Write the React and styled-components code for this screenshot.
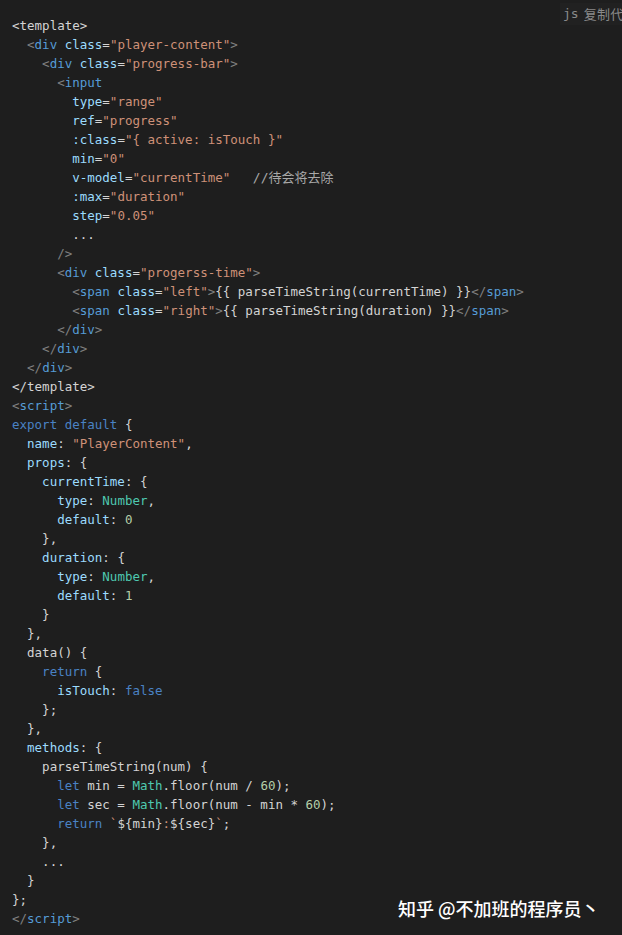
import React from "react";
import styled, { createGlobalStyle } from "styled-components";

const Global = createGlobalStyle`
  html, body { margin: 0; padding: 0; background: #1e1e1e; }
  #root { width: 622px; height: 935px; }
`;

const Page = styled.div`
  position: relative;
  width: 622px;
  height: 935px;
  overflow: hidden;
  background: #1e1e1e;
`;

const Code = styled.pre`
  margin: 0;
  padding: 16px 12px 0 12px;
  font-family: "DejaVu Sans Mono", "Liberation Mono", "Noto Sans CJK SC", monospace;
  font-size: 12.5px;
  line-height: 19px;
  color: #d4d4d4;
`;

const Line = styled.div`
  height: 19px;
  white-space: pre;
`;

const colors = {
  p: "#d4d4d4",
  b: "#808080",
  t: "#569cd6",
  a: "#9cdcfe",
  s: "#ce9178",
  k: "#4a82c4",
  y: "#4ec9b0",
  n: "#b5cea8",
  c: "#a8a8a8",
};

const Token = styled.span`
  color: ${(p) => colors[p.$kind] || colors.p};
  ${(p) =>
    p.$kind === "c" &&
    `font-family: "DejaVu Sans Mono", "Noto Sans CJK SC", monospace; font-size: 13px;`}
`;

const Label = styled.div`
  position: absolute;
  top: 3px;
  left: 560px;
  display: flex;
  align-items: center;
  padding: 2px 3px;
  background: #212121;
  color: #8a8a8a;
  font-family: "Noto Sans", "Noto Sans CJK SC", sans-serif;
  font-size: 13px;
  line-height: 18px;
  white-space: nowrap;
`;

const Lang = styled.span`
  font-family: "DejaVu Sans Mono", monospace;
  font-size: 13px;
`;

const CopyText = styled.span`
  margin-left: 5px;
  font-family: "Noto Sans CJK SC", sans-serif;
  font-size: 13px;
  letter-spacing: 0.3px;
`;

const Watermark = styled.div`
  position: absolute;
  left: 398px;
  top: 896px;
  color: #ffffff;
  font-family: "Noto Sans CJK SC", "Noto Sans", sans-serif;
  font-size: 18px;
  font-weight: 500;
  line-height: 24px;
  white-space: nowrap;
`;

const ind = (n) => ["p", " ".repeat(n)];
const open = (tag) => [["b", "<"], ["t", tag]];
const close = (tag) => [["b", "</"], ["t", tag], ["b", ">"]];
const attr = (name, val) => [["p", " "], ["a", name], ["p", "="], ["s", `"${val}"`]];

const lines = [
  [["p", "<template>"]],
  [ind(2), ...open("div"), ...attr("class", "player-content"), ["b", ">"]],
  [ind(4), ...open("div"), ...attr("class", "progress-bar"), ["b", ">"]],
  [ind(6), ...open("input")],
  [ind(8), ["a", "type"], ["p", "="], ["s", '"range"']],
  [ind(8), ["a", "ref"], ["p", "="], ["s", '"progress"']],
  [ind(8), ["a", ":class"], ["p", "="], ["s", '"{ active: isTouch }"']],
  [ind(8), ["a", "min"], ["p", "="], ["s", '"0"']],
  [ind(8), ["a", "v-model"], ["p", "="], ["s", '"currentTime"'], ["p", "   "], ["c", "//待会将去除"]],
  [ind(8), ["a", ":max"], ["p", "="], ["s", '"duration"']],
  [ind(8), ["a", "step"], ["p", "="], ["s", '"0.05"']],
  [ind(8), ["p", "..."]],
  [ind(6), ["b", "/>"]],
  [ind(6), ...open("div"), ...attr("class", "progerss-time"), ["b", ">"]],
  [ind(8), ...open("span"), ...attr("class", "left"), ["b", ">"], ["p", "{{ parseTimeString(currentTime) }}"], ...close("span")],
  [ind(8), ...open("span"), ...attr("class", "right"), ["b", ">"], ["p", "{{ parseTimeString(duration) }}"], ...close("span")],
  [ind(6), ...close("div")],
  [ind(4), ...close("div")],
  [ind(2), ...close("div")],
  [["p", "</template>"]],
  [["b", "<"], ["t", "script"], ["b", ">"]],
  [["k", "export"], ["p", " "], ["k", "default"], ["p", " {"]],
  [ind(2), ["a", "name"], ["p", ": "], ["s", '"PlayerContent"'], ["p", ","]],
  [ind(2), ["a", "props"], ["p", ": {"]],
  [ind(4), ["a", "currentTime"], ["p", ": {"]],
  [ind(6), ["a", "type"], ["p", ": "], ["y", "Number"], ["p", ","]],
  [ind(6), ["a", "default"], ["p", ": "], ["n", "0"]],
  [ind(4), ["p", "},"]],
  [ind(4), ["a", "duration"], ["p", ": {"]],
  [ind(6), ["a", "type"], ["p", ": "], ["y", "Number"], ["p", ","]],
  [ind(6), ["a", "default"], ["p", ": "], ["n", "1"]],
  [ind(4), ["p", "}"]],
  [ind(2), ["p", "},"]],
  [ind(2), ["p", "data() {"]],
  [ind(4), ["k", "return"], ["p", " {"]],
  [ind(6), ["a", "isTouch"], ["p", ": "], ["k", "false"]],
  [ind(4), ["p", "};"]],
  [ind(2), ["p", "},"]],
  [ind(2), ["a", "methods"], ["p", ": {"]],
  [ind(4), ["p", "parseTimeString(num) {"]],
  [ind(6), ["k", "let"], ["p", " min = "], ["y", "Math"], ["p", ".floor(num / "], ["n", "60"], ["p", ");"]],
  [ind(6), ["k", "let"], ["p", " sec = "], ["y", "Math"], ["p", ".floor(num - min * "], ["n", "60"], ["p", ");"]],
  [ind(6), ["k", "return"], ["p", " "], ["s", "`"], ["p", "${min}"], ["s", ":"], ["p", "${sec}"], ["s", "`"], ["p", ";"]],
  [ind(4), ["p", "},"]],
  [ind(4), ["p", "..."]],
  [ind(2), ["p", "}"]],
  [["p", "};"]],
  [["b", "</"], ["t", "script"], ["b", ">"]],
];

export default function App() {
  return (
    <Page>
      <Global />
      <Code>
        {lines.map((segs, i) => (
          <Line key={i}>
            {segs.map(([k, text], j) => (
              <Token key={j} $kind={k}>
                {text}
              </Token>
            ))}
          </Line>
        ))}
      </Code>
      <Label>
        <Lang>js</Lang>
        <CopyText>复制代码</CopyText>
      </Label>
      <Watermark>知乎 @不加班的程序员丶</Watermark>
    </Page>
  );
}
